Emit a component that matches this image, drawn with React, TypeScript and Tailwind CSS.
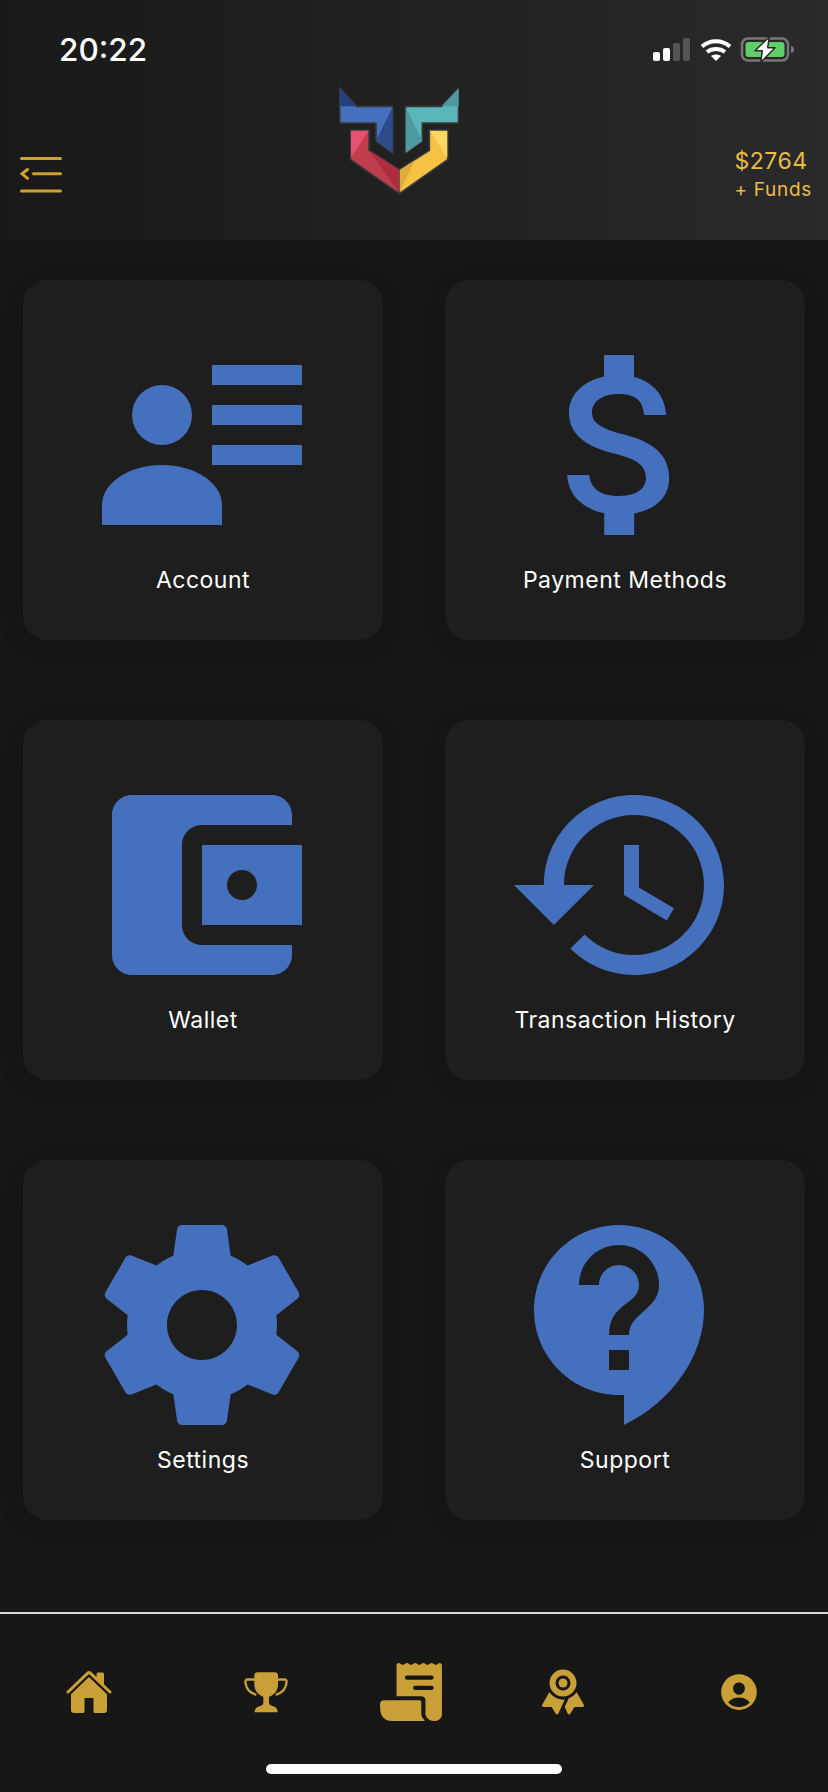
import type { ReactNode } from "react";
import { IoHome, IoReceipt, IoRibbon, IoPersonCircle } from "react-icons/io5";

const BLUE = "#4470bd";

/* Menu icons all sit in the same 24-unit box, drawn at 10px per unit */
function MenuIcon({ children }: { children: ReactNode }) {
  return (
    <svg viewBox="0 0 24 24" className="block h-60 w-60" fill={BLUE}>
      {children}
    </svg>
  );
}

const menu: { label: string; icon: ReactNode }[] = [
  {
    label: "Account",
    icon: (
      <>
        <circle cx="8" cy="9" r="3" />
        <path d="M8 14c-3.31 0-6 1.79-6 4v2h12v-2c0-2.21-2.69-4-6-4z" />
        <path d="M13 4h9v2h-9zM13 8h9v2h-9zM13 12h9v2h-9z" />
      </>
    ),
  },
  {
    label: "Payment Methods",
    icon: (
      <path d="M11.8 10.9c-2.27-.59-3-1.2-3-2.15 0-1.09 1.01-1.85 2.7-1.85 1.78 0 2.44.85 2.5 2.1h2.21c-.07-1.72-1.12-3.3-3.21-3.81V3h-3v2.16c-1.94.42-3.5 1.68-3.5 3.61 0 2.31 1.91 3.46 4.7 4.13 2.5.6 3 1.48 3 2.41 0 .69-.49 1.79-2.7 1.79-2.06 0-2.87-.92-2.98-2.1h-2.2c.12 2.19 1.76 3.42 3.7 3.83V21h3v-2.15c1.95-.37 3.5-1.5 3.5-3.55 0-2.84-2.43-3.81-4.7-4.4z" />
    ),
  },
  {
    label: "Wallet",
    icon: (
      <path d="M21 18v1c0 1.1-.9 2-2 2H5c-1.11 0-2-.9-2-2V5c0-1.1.89-2 2-2h14c1.1 0 2 .9 2 2v1h-9c-1.11 0-2 .9-2 2v8c0 1.1.89 2 2 2h9zm-9-2h10V8H12v8zm4-2.5c-.83 0-1.5-.67-1.5-1.5s.67-1.5 1.5-1.5 1.5.67 1.5 1.5-.67 1.5-1.5 1.5z" />
    ),
  },
  {
    label: "Transaction History",
    icon: (
      <path d="M13 3c-4.97 0-9 4.03-9 9H1l3.89 3.89.07.14L9 12H6c0-3.87 3.13-7 7-7s7 3.13 7 7-3.13 7-7 7c-1.93 0-3.68-.79-4.94-2.06l-1.42 1.42C8.27 19.99 10.51 21 13 21c4.97 0 9-4.03 9-9s-4.03-9-9-9zm-1 5v5l4.28 2.54.72-1.21-3.5-2.08V8H12z" />
    ),
  },
  {
    label: "Settings",
    icon: (
      <path d="M19.43 12.98c.04-.32.07-.64.07-.98s-.03-.66-.07-.98l2.11-1.65c.19-.15.24-.42.12-.64l-2-3.46c-.12-.22-.39-.3-.61-.22l-2.49 1c-.52-.4-1.08-.73-1.69-.98l-.38-2.65C14.46 2.18 14.25 2 14 2h-4c-.25 0-.46.18-.49.42l-.38 2.65c-.61.25-1.17.59-1.69.98l-2.49-1c-.23-.09-.49 0-.61.22l-2 3.46c-.13.22-.07.49.12.64l2.11 1.65c-.04.32-.07.65-.07.98s.03.66.07.98l-2.11 1.65c-.19.15-.24.42-.12.64l2 3.46c.12.22.39.3.61.22l2.49-1c.52.4 1.08.73 1.69.98l.38 2.65c.03.24.24.42.49.42h4c.25 0 .46-.18.49-.42l.38-2.65c.61-.25 1.17-.59 1.69-.98l2.49 1c.23.09.49 0 .61-.22l2-3.46c.12-.22.07-.49-.12-.64l-2.11-1.65zM12 15.5c-1.93 0-3.5-1.57-3.5-3.5s1.57-3.5 3.5-3.5 3.5 1.57 3.5 3.5-1.57 3.5-3.5 3.5z" />
    ),
  },
  {
    label: "Support",
    icon: (
      <path d="M11.5 2C6.81 2 3 5.81 3 10.5S6.81 19 11.5 19h.5v3c4.86-2.34 8-7 8-11.5C20 5.81 16.19 2 11.5 2zm1 14.5h-2v-2h2v2zm0-3.5h-2c0-3.25 3-3 3-5 0-1.1-.9-2-2-2s-2 .9-2 2h-2c0-2.21 1.79-4 4-4s4 1.79 4 4c0 2.5-3 2.75-3 5z" />
    ),
  },
];

function StatusIcons() {
  return (
    <svg width="141" height="26" viewBox="0 0 141 26" className="block overflow-visible">
      {/* signal */}
      <rect x="0" y="15" width="7" height="9" rx="2" fill="#fff" />
      <rect x="10" y="11" width="7" height="13" rx="2" fill="#fff" />
      <rect x="20" y="6" width="7" height="18" rx="2" fill="#555" />
      <rect x="30" y="1" width="7" height="23" rx="2" fill="#555" />
      {/* wifi */}
      <g fill="none" stroke="#fff" strokeWidth="4">
        <path d="M49 9.5c8-7 20-7 28 0" />
        <path d="M54 15c5-4 13-4 18 0" />
      </g>
      <path d="M58 19c3-2 7-2 10 0l-5 5z" fill="#fff" />
      {/* battery */}
      <rect x="89" y="1.5" width="46" height="22" rx="6" fill="none" stroke="#777" strokeWidth="2.5" />
      <rect x="92.5" y="5" width="39" height="15" rx="3" fill="#5fcf68" />
      <path d="M138 9c2 0 3 1.5 3 3.5s-1 3.5-3 3.5z" fill="#777" />
      <path
        d="M116.3 0L102 13.7h7.3L107.7 25.3 122 10.7h-7.3z"
        fill="#fff"
        stroke="#2a2a2a"
        strokeWidth="1.5"
        strokeLinejoin="round"
      />
    </svg>
  );
}

function MenuToggle() {
  return (
    <svg width="42" height="36" viewBox="0 0 42 36" className="block" fill="none" stroke="#d0a12f" strokeWidth="3" strokeLinecap="round">
      <path d="M1.5 1.5h39M13.5 16.8h27M1.5 34h39" />
      <path d="M7.5 12.5l-5.5 4.3 5.5 4.500" />
    </svg>
  );
}

function Logo() {
  return (
    <svg width="120" height="108" viewBox="117 50 360 324" className="block">
      {/* outlines first, facets laid over without a stroke */}
      <g stroke="#3a3a3a" strokeWidth="5" strokeLinejoin="round">
        <path d="M118 52L170 108H278V248L228 212V158H120z" fill="#4470bd" />
        <path d="M477 52L425 108H317V248L367 212V158H475z" fill="#5ab6ba" />
        <path d="M152 180H207V240L298 298V370L152 268z" fill="#bf3d4c" />
        <path d="M443 180H388V240L298 298V370L443 268z" fill="#f5c244" />
      </g>
      <path d="M119 54L170 108H119z" fill="#24417f" />
      <path d="M278 110V247L228 212z" fill="#2c4c8c" />
      <path d="M476 54L425 108H476z" fill="#4f98a0" />
      <path d="M317 110V247L367 212z" fill="#4f9aa2" />
      <path d="M153 181H206L153 262z" fill="#e8506f" />
      <path d="M207 240L297 298V366z" fill="#b02a42" />
      <path d="M442 181H389L442 262z" fill="#fdd763" />
      <path d="M299 299V366L345 270z" fill="#dcab38" />
    </svg>
  );
}

function TrophyIcon() {
  return (
    <svg width="44" height="42" viewBox="733 245 132 125" fill="#c9a038" className="block">
      <path d="M775 248H825Q835 248 835 258V285C835 310 815 320 808 322V340Q808 348 820 350C830 352 834 358 834 368H765C765 358 770 352 780 350Q791 348 791 340V322C785 320 764 310 764 285V258Q764 248 775 248z" />
      <path
        d="M766 270H742C735 270 737 285 742 295C748 308 760 313 770 316M832 270H856C863 270 861 285 856 295C850 308 838 313 828 316"
        fill="none"
        stroke="#c9a038"
        strokeWidth="7"
      />
    </svg>
  );
}

const nav: ReactNode[] = [
  <IoHome size={48} />,
  <TrophyIcon />,
  <IoReceipt size={66} />,
  <IoRibbon size={48} />,
  <IoPersonCircle size={44} />,
];

export default function App() {
  return (
    <div
      className="flex h-[1792px] w-[828px] flex-col overflow-hidden bg-[#161616] text-white"
      style={{ fontFamily: "Inter, 'Liberation Sans', sans-serif" }}
    >
      {/* ── Header ── */}
      <header className="h-[240px] bg-gradient-to-r from-[#191919] to-[#2b2a2a]">
        <div className="flex h-[87px] items-start pt-[30px]">
          <span className="ml-[59px] text-[31.5px] leading-[40px] font-medium">20:22</span>
          <div className="mt-[7px] ml-auto mr-[34px]">
            <StatusIcons />
          </div>
        </div>
        <div className="flex items-start">
          <div className="mt-[70px] ml-5">
            <MenuToggle />
          </div>
          <div className="ml-[277px]">
            <Logo />
          </div>
          <div className="mt-[59px] ml-auto mr-4 text-[#e9bc45]">
            <div className="text-[23px] leading-[30px] tracking-[0.5px]">$2764</div>
            <div className="text-[19px] leading-[27px] tracking-[0.7px]">+ Funds</div>
          </div>
        </div>
      </header>

      {/* ── Menu cards ── */}
      <main className="grid flex-1 grid-cols-[360px_360px] content-start gap-x-[62px] gap-y-20 px-[23px] pt-10">
        {menu.map((item) => (
          <div
            key={item.label}
            className="flex h-[360px] flex-col rounded-3xl bg-[#1e1e1e] pt-[45px] shadow-[0_6px_24px_rgba(0,0,0,0.12)]"
          >
            <div className="ml-[59px]">
              <MenuIcon>{item.icon}</MenuIcon>
            </div>
            <p className="mt-px text-center text-[23px] leading-[28px] tracking-[0.5px]">{item.label}</p>
          </div>
        ))}
      </main>

      {/* ── Bottom nav ── */}
      <footer className="h-[180px] border-t-2 border-[#d8d8d8] bg-[#171717]">
        <div className="mt-[30px] grid h-24 grid-cols-[177px_178px_112px_192px_159px] items-center">
          {nav.map((icon, i) => (
            <div key={i} className="flex justify-center text-[#c9a038]">
              {icon}
            </div>
          ))}
        </div>
        <div className="mx-auto mt-[24px] h-2.5 w-[296px] rounded-full bg-white" />
      </footer>
    </div>
  );
}
